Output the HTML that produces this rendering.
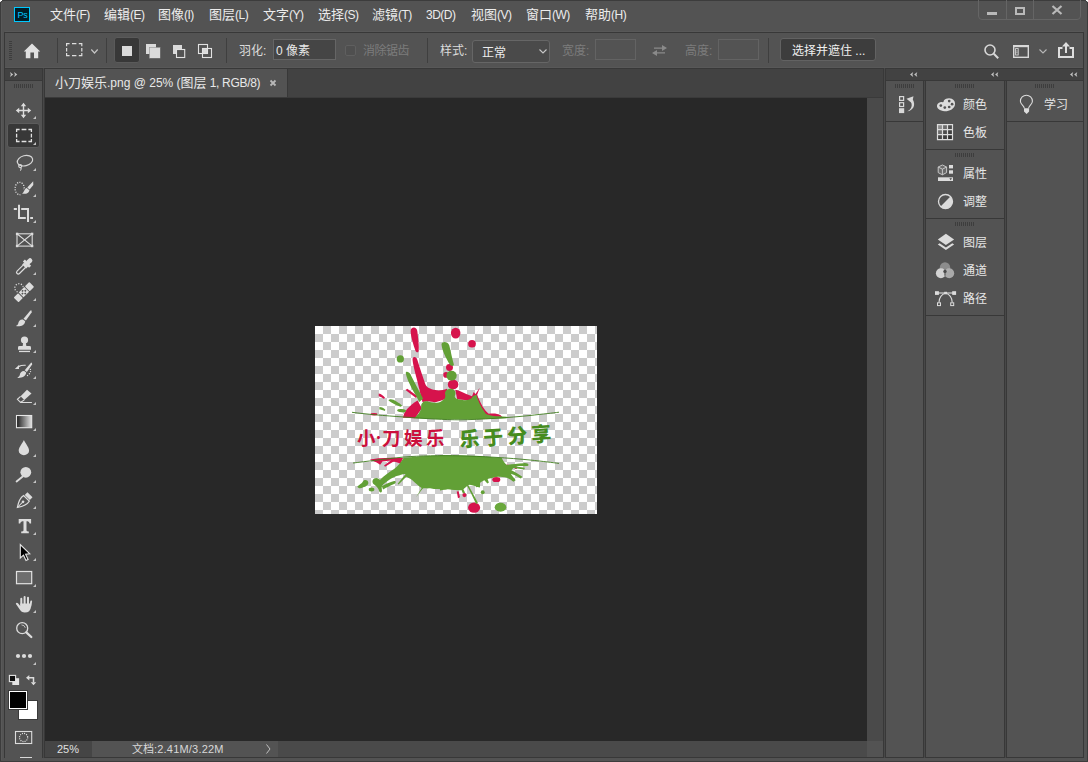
<!DOCTYPE html>
<html lang="zh-CN">
<head>
<meta charset="utf-8">
<title>Photoshop</title>
<style>
*{box-sizing:border-box;margin:0;padding:0}
html,body{width:1088px;height:762px;overflow:hidden;background:#535353}
body{font-family:"Liberation Sans","Noto Sans CJK SC",sans-serif;color:#e4e4e4;font-size:12px;position:relative}
.a{position:absolute}
.ln{position:absolute;background:#383838}
.t{position:absolute;white-space:nowrap;line-height:16px}
.menu .t{font-size:13px;top:7px;color:#ececec}
.l{font-size:12px;letter-spacing:-0.5px}
.opt .t{font-size:12px;color:#dcdcdc}
.dim{color:#7c7c7c !important}
.inp{position:absolute;background:#454545;border:1px solid #656565}
.inp.d{background:#535353;border-color:#636363}
.grip{position:absolute;height:4px;background:repeating-linear-gradient(90deg,#3d3d3d 0,#3d3d3d 1px,transparent 1px,transparent 2px)}
.gripv{position:absolute;width:3px;background:repeating-linear-gradient(180deg,#3d3d3d 0,#3d3d3d 1px,transparent 1px,transparent 2px)}
.pl .t{font-size:12px;color:#e6e6e6}
svg{position:absolute;overflow:visible}
.tri{position:absolute;width:0;height:0;border-left:3px solid transparent;border-bottom:3px solid #c8c8c8}
</style>
</head>
<body>
<!-- window frame -->
<div class="a" style="left:0;top:0;width:1088px;height:762px;border:1px solid #3c3c3c;border-radius:3px 3px 0 0"></div>
<div class="a" style="left:0;top:0;width:2px;height:1px;background:#fff"></div>
<div class="a" style="left:1086px;top:0;width:2px;height:1px;background:#fff"></div><div class="a" style="left:1087px;top:1px;width:1px;height:1px;background:#ddd"></div>
<div class="a" style="left:0;top:1px;width:1px;height:1px;background:#ddd"></div>

<!-- MENU BAR -->
<div class="menu">
  <div class="a" style="left:14px;top:7px;width:16px;height:15px;background:#001d26;border:1px solid #00c8ff;outline:0"></div>
  <div class="t" style="left:17.5px;top:7px;font-size:9px;color:#00c8ff;letter-spacing:-0.3px;line-height:16px">Ps</div>
  <div class="t" style="left:50px">文件<span class="l">(F)</span></div>
  <div class="t" style="left:104px">编辑<span class="l">(E)</span></div>
  <div class="t" style="left:158px">图像<span class="l">(I)</span></div>
  <div class="t" style="left:209px">图层<span class="l">(L)</span></div>
  <div class="t" style="left:263px">文字<span class="l">(Y)</span></div>
  <div class="t" style="left:318px">选择<span class="l">(S)</span></div>
  <div class="t" style="left:372px">滤镜<span class="l">(T)</span></div>
  <div class="t" style="left:426px"><span class="l">3D(D)</span></div>
  <div class="t" style="left:471px">视图<span class="l">(V)</span></div>
  <div class="t" style="left:526px">窗口<span class="l">(W)</span></div>
  <div class="t" style="left:585px">帮助<span class="l">(H)</span></div>
  <!-- window controls -->
  <div class="a" style="left:978px;top:-1px;width:103px;height:21px;border:1px solid #656565;border-radius:0 0 4px 4px"></div>
  <div class="a" style="left:1006px;top:0;width:1px;height:19px;background:#656565"></div>
  <div class="a" style="left:1033px;top:0;width:1px;height:19px;background:#656565"></div>
  <div class="a" style="left:987px;top:12px;width:10px;height:3px;background:#b9b9b9"></div>
  <div class="a" style="left:1015px;top:7px;width:10px;height:8px;border:2px solid #b9b9b9"></div>
  <svg style="left:1052px;top:6px" width="10" height="8" viewBox="0 0 10 8"><path d="M0.5 0 L9.5 8 M9.5 0 L0.5 8" stroke="#b9b9b9" stroke-width="2.2" fill="none"/></svg>
</div>

<!-- OPTIONS BAR -->
<div class="opt">
  <div class="ln" style="left:4px;top:32px;width:1080px;height:1px"></div>
  <div class="ln" style="left:4px;top:32px;width:1px;height:726px"></div>
  <div class="ln" style="left:1083px;top:32px;width:1px;height:726px"></div>
  <div class="ln" style="left:42px;top:757px;width:1042px;height:1px"></div>
  <div class="ln" style="left:4px;top:68px;width:1080px;height:1px"></div>
  <div class="a" style="left:5px;top:67px;width:1078px;height:1px;background:#585858"></div>
  <div class="a" style="left:5px;top:31px;width:1078px;height:1px;background:#585858"></div>
  <div class="a" style="left:1px;top:3px;width:1px;height:757px;background:#595959"></div>
  <div class="gripv" style="left:9px;top:41px;height:20px"></div>
  <!-- home -->
  <svg style="left:24px;top:43px" width="16" height="15" viewBox="0 0 16 15"><path d="M8 0.6 L16.2 8.4 L14.2 8.4 L14.2 15.2 L10 15.2 L10 9.4 L6.4 9.4 L6.4 15.2 L1.8 15.2 L1.8 8.4 L-0.2 8.4 Z" fill="#e0e0e0"/></svg>
  <div class="ln" style="left:57px;top:38px;width:1px;height:25px;background:#3f3f3f"></div>
  <svg style="left:66px;top:43px" width="16" height="13" viewBox="0 0 16 13"><path d="M0.6 3.2 V0.6 H3.6 M6 0.6 H10.4 M12.8 0.6 H15.8 V3.2 M0.6 5 V8.4 M15.8 5 V8.4 M0.6 10 V12.6 H3.6 M6 12.6 H10.4 M12.8 12.6 H15.8 V10" fill="none" stroke="#dedede" stroke-width="1.2"/></svg>
  <svg style="left:91px;top:49px" width="7" height="5" viewBox="0 0 7 5"><path d="M0.3 0.5 L3.5 4 L6.7 0.5" stroke="#c4c4c4" stroke-width="1.2" fill="none"/></svg>
  <div class="ln" style="left:106px;top:38px;width:1px;height:25px;background:#3f3f3f"></div>
  <div class="a" style="left:114px;top:37px;width:26px;height:26px;background:#383838;border:1px solid #5a5a5a;border-radius:3px"></div>
  <div class="a" style="left:122px;top:46px;width:10px;height:10px;background:#dadada"></div>
  <!-- add -->
  <svg style="left:146px;top:44px" width="14" height="14" viewBox="0 0 14 14"><rect x="0" y="0" width="10" height="10" fill="#dadada"/><rect x="3.6" y="3.6" width="10.4" height="10.4" fill="#dadada" stroke="#9c9c9c" stroke-width="0.7"/><rect x="4" y="4" width="10" height="10" fill="#dadada"/></svg>
  <!-- subtract -->
  <svg style="left:173px;top:45px" width="13" height="13" viewBox="0 0 13 13"><rect x="0" y="0" width="9" height="9" fill="#dadada"/><rect x="3.5" y="4.5" width="8.2" height="8" fill="#535353" stroke="#e2e2e2" stroke-width="1.1"/></svg>
  <!-- intersect -->
  <svg style="left:198px;top:44px" width="14" height="14" viewBox="0 0 14 14"><rect x="0.5" y="0.5" width="9" height="9" fill="none" stroke="#e2e2e2" stroke-width="1.1"/><rect x="4.5" y="4.5" width="9" height="9" fill="none" stroke="#e2e2e2" stroke-width="1.1"/><rect x="5" y="5" width="4" height="4" fill="#dadada"/></svg>
  <div class="ln" style="left:226px;top:38px;width:1px;height:25px;background:#3f3f3f"></div>
  <div class="t" style="left:239px;top:43px">羽化:</div>
  <div class="inp" style="left:273px;top:39px;width:63px;height:21px"></div>
  <div class="t" style="left:276px;top:43px;color:#e8e8e8">0 像素</div>
  <div class="a" style="left:345px;top:45px;width:11px;height:11px;border:1px solid #5f5f5f;border-radius:2px;background:#4f4f4f"></div>
  <div class="t dim" style="left:363px;top:43px;letter-spacing:-0.5px">消除锯齿</div>
  <div class="ln" style="left:427px;top:38px;width:1px;height:25px;background:#3f3f3f"></div>
  <div class="t" style="left:440px;top:43px">样式:</div>
  <div class="a" style="left:472px;top:40px;width:78px;height:23px;background:#4a4a4a;border:1px solid #666;border-radius:3px"></div>
  <div class="t" style="left:482px;top:45px;color:#ececec">正常</div>
  <svg style="left:539px;top:49px" width="8" height="5" viewBox="0 0 8 5"><path d="M0.5 0.5 L4 4 L7.5 0.5" stroke="#c8c8c8" stroke-width="1.1" fill="none"/></svg>
  <div class="t dim" style="left:562px;top:43px">宽度:</div>
  <div class="inp d" style="left:595px;top:39px;width:41px;height:21px"></div>
  <svg style="left:652px;top:44px" width="15" height="13" viewBox="0 0 15 13"><path d="M2 3.5 H10 V1 L15 4 L10 7 V4.8 H2 Z M13 9.5 H5 V12 L0 9 L5 6 V8.2 H13 Z" fill="#8a8a8a"/></svg>
  <div class="t dim" style="left:685px;top:43px">高度:</div>
  <div class="inp d" style="left:718px;top:39px;width:41px;height:21px"></div>
  <div class="ln" style="left:768px;top:38px;width:1px;height:25px;background:#3f3f3f"></div>
  <div class="a" style="left:780px;top:38px;width:96px;height:23px;background:#3d3d3d;border:1px solid #626262;border-radius:3px"></div>
  <div class="t" style="left:792px;top:43px;color:#f0f0f0">选择并遮住 ...</div>
  <!-- search -->
  <svg style="left:983.7px;top:44px" width="15" height="15" viewBox="0 0 15 15"><circle cx="6" cy="6" r="5" fill="none" stroke="#d8d8d8" stroke-width="1.6"/><path d="M9.8 9.8 L14.2 14.2" stroke="#d8d8d8" stroke-width="2"/></svg>
  <!-- workspace -->
  <svg style="left:1013px;top:45px" width="16" height="13" viewBox="0 0 16 13"><rect x="0.7" y="0.7" width="14.6" height="11.6" fill="none" stroke="#d8d8d8" stroke-width="1.4"/><rect x="0" y="0" width="16" height="2.2" fill="#d8d8d8"/><rect x="2.6" y="3.6" width="2.6" height="6.4" fill="none" stroke="#d8d8d8" stroke-width="0.9"/><rect x="3.2" y="5.6" width="1.4" height="0.8" fill="#d8d8d8"/><rect x="3.2" y="7.4" width="1.4" height="0.8" fill="#d8d8d8"/></svg>
  <svg style="left:1038.7px;top:49px" width="8" height="5" viewBox="0 0 8 5"><path d="M0.5 0.5 L4 4 L7.5 0.5" stroke="#b8b8b8" stroke-width="1.1" fill="none"/></svg>
  <!-- share -->
  <svg style="left:1058px;top:42px" width="16" height="16" viewBox="0 0 16 16"><path d="M4.5 6 H1 V15 H15 V6 H11.5" fill="none" stroke="#dedede" stroke-width="2"/><path d="M8 11 V3" stroke="#dedede" stroke-width="2"/><path d="M4 4.5 L8 0 L12 4.5 Z" fill="#dedede"/></svg>
</div>

<div class="a" style="left:43px;top:68px;width:1px;height:1px;background:#484848"></div><div class="a" style="left:884px;top:68px;width:1px;height:1px;background:#484848"></div>
<!-- TOOLBAR -->
<div class="tb" id="tb">
  <div class="a" style="left:5px;top:69px;width:37px;height:11px;background:#424242"></div>
  <div class="ln" style="left:5px;top:80px;width:37px;height:1px"></div>
  <div class="a" style="left:42px;top:69px;width:3px;height:689px;background:linear-gradient(90deg,#383838 0,#383838 1px,#484848 1px,#484848 2px,#383838 2px,#383838 3px)"></div>
  <svg style="left:10px;top:72px" width="8" height="5" viewBox="0 0 8 5"><path d="M0 0 L3.2 2.5 L0 5 L0.8 2.5 Z M4.1 0 L7.3 2.5 L4.1 5 L4.9 2.5 Z" fill="#c4c4c4"/></svg>
  <div class="grip" style="left:14px;top:84px;width:20px"></div>
  <div class="a" style="left:7px;top:123px;width:33px;height:25px;background:#383838;border:1px solid #5c5c5c;border-radius:3px"></div>
<!--TOOLS-START-->
<svg style="left:0;top:0" width="45" height="762" viewBox="0 0 45 762" fill="none">
<g fill="#c4c4c4">
<path d="M33 119 H36 V116 Z"/>
<path d="M33 145 H36 V142 Z"/>
<path d="M33 171 H36 V168 Z"/>
<path d="M33 197 H36 V194 Z"/>
<path d="M33 223 H36 V220 Z"/>
<path d="M33 275 H36 V272 Z"/>
<path d="M33 301 H36 V298 Z"/>
<path d="M33 327 H36 V324 Z"/>
<path d="M33 353 H36 V350 Z"/>
<path d="M33 379 H36 V376 Z"/>
<path d="M33 405 H36 V402 Z"/>
<path d="M33 431 H36 V428 Z"/>
<path d="M33 457 H36 V454 Z"/>
<path d="M33 483 H36 V480 Z"/>
<path d="M33 509 H36 V506 Z"/>
<path d="M33 535 H36 V532 Z"/>
<path d="M33 561 H36 V558 Z"/>
<path d="M33 587 H36 V584 Z"/>
<path d="M33 613 H36 V610 Z"/>
<path d="M33 665 H36 V662 Z"/>
</g>
<g fill="#dcdcdc" stroke="none">
<!-- move -->
<path d="M22.8 105.5 H24.2 V109.8 H28.5 V111.2 H24.2 V115.5 H22.8 V111.2 H18.5 V109.8 H22.8 Z"/>
<path d="M23.5 102.8 L26.2 106.2 H20.8 Z M23.5 118.2 L26.2 114.8 H20.8 Z M15.8 110.5 L19.2 107.8 V113.2 Z M31.2 110.5 L27.8 107.8 V113.2 Z"/>
</g>
<!-- marquee -->
<path d="M16.6 132 V129.5 H19.6 M21.6 129.5 H26.4 M28.4 129.5 H31.4 V132 M16.6 133.8 V137.4 M31.4 133.8 V137.4 M16.6 139 V141.5 H19.6 M21.6 141.5 H26.4 M28.4 141.5 H31.4 V139" stroke="#e2e2e2" stroke-width="1.3"/>
<!-- lasso -->
<g stroke="#d6d6d6" stroke-width="1.2">
<ellipse cx="25" cy="160.7" rx="7.8" ry="5.1" transform="rotate(-14 25 160.7)"/>
<circle cx="20.2" cy="166.1" r="1.5"/>
<path d="M20.9 167.4 Q21.8 169.4 20.3 170.6"/>
</g>
<!-- quick select -->
<ellipse cx="19.7" cy="188.5" rx="4.6" ry="6.2" stroke="#e0e0e0" stroke-width="1.3" stroke-dasharray="1.1 1.36"/>
<g fill="#dcdcdc">
<path d="M33.2 181.2 L33.3 185 L29.6 189.6 L27.3 187.6 Z M26.7 188 C24.3 188.6 24.4 192 22 193.6 C25 194.4 29.2 193.3 29.4 190.2 Z" stroke="#535353" stroke-width="2.2"/>
<path d="M33.2 181.2 L33.3 185 L29.6 189.6 L27.3 187.6 Z"/>
<path d="M26.7 188 C24.3 188.6 24.4 192 22 193.6 C25 194.4 29.2 193.3 29.4 190.2 Z"/>
</g>
<!-- crop -->
<path d="M19 204.8 V217.9 H25.8 M13.8 209 H16.9 M21.2 209 H28 V222 M30.2 217.9 H33" stroke="#dcdcdc" stroke-width="2"/>
<!-- frame -->
<g stroke="#dcdcdc" stroke-width="1.1">
<rect x="17" y="233.8" width="15.2" height="12.3"/>
<path d="M17 233.8 L32.2 246.1 M32.2 233.8 L17 246.1"/>
</g>
<g fill="#dcdcdc"><rect x="15.9" y="232.7" width="2.4" height="2.4"/><rect x="30.9" y="232.7" width="2.4" height="2.4"/><rect x="15.9" y="244.8" width="2.4" height="2.4"/><rect x="30.9" y="244.8" width="2.4" height="2.4"/></g>
<!-- eyedropper -->
<g transform="translate(24.2 266.4) rotate(45)">
<rect x="-2.3" y="-10.6" width="4.6" height="7" rx="2.3" fill="#dcdcdc"/>
<rect x="-4.4" y="-5.4" width="8.8" height="2.9" fill="#dcdcdc"/>
<rect x="-2.8" y="-2.8" width="5.6" height="2.8" fill="#dcdcdc"/>
<path d="M-1.7 -0.5 V8.4 A1.7 1.7 0 0 0 1.7 8.4 V-0.5" stroke="#dcdcdc" stroke-width="1.2"/>
</g>
<!-- healing -->
<circle cx="19.1" cy="288" r="4.3" stroke="#e0e0e0" stroke-width="1.3" stroke-dasharray="1.1 1.6"/>
<g transform="translate(23.9 292.2) rotate(-45)">
<rect x="-12" y="-4.3" width="24" height="8.6" fill="#535353"/>
<rect x="-11" y="-3.4" width="6.2" height="6.8" rx="0.8" fill="#dcdcdc"/>
<rect x="4.8" y="-3.4" width="6.2" height="6.8" rx="0.8" fill="#dcdcdc"/>
<rect x="-3.9" y="-3.4" width="7.8" height="6.8" fill="#dcdcdc"/>
<g fill="#535353"><rect x="-0.85" y="-2.7" width="1.7" height="1.6"/><rect x="-0.85" y="1.1" width="1.7" height="1.6"/><rect x="-2.9" y="-0.8" width="1.7" height="1.6"/><rect x="1.2" y="-0.8" width="1.7" height="1.6"/></g>
</g>
<!-- brush -->
<g fill="#dcdcdc">
<path d="M30.4 310.5 L31.6 310.6 L31.6 312.4 L25.9 320.6 L23.5 318.8 Z"/>
<path d="M22.9 319.5 C19.8 319.3 18.6 321.6 18.3 323.3 C18 325 17 325.6 15.9 326 C19 326.8 24.6 326.3 25.2 321.2 Z"/>
<!-- stamp -->
<circle cx="24.5" cy="340" r="3.6"/>
<path d="M23.2 342.5 H25.8 L26.4 346.3 H22.6 Z"/>
<path d="M18 349.8 V347.4 Q18 346.1 19.5 346.1 H29.5 Q31 346.1 31 347.4 V349.8 Z"/>
<rect x="19" y="350.8" width="11" height="1.3"/>
<!-- history brush -->
<path d="M31 362.8 L32 362.8 L32.1 364.6 L26.9 371.9 L24.7 370.3 Z"/>
<path d="M24.2 370.9 C21.4 370.8 20.2 372.8 19.9 374.5 C19.6 376.2 18.4 377.2 17 377.8 C20 378.3 25.6 377.6 26.2 372.6 Z"/>
<path d="M14.8 368.9 L19 365 V369 Z"/>
<circle cx="30.4" cy="369.4" r="0.7"/><circle cx="30.5" cy="371.6" r="0.7"/><circle cx="29.4" cy="373.7" r="0.7"/><circle cx="27.5" cy="375.5" r="0.7"/>
</g>
<path d="M18.5 366.6 Q21.5 365 25.6 365.3" stroke="#dcdcdc" stroke-width="1.2"/>
<!-- eraser -->
<path d="M27 389.7 L31.5 393.4 L24.3 399.9 L20.6 396.3 Z" fill="#dcdcdc"/>
<path d="M20.6 396.3 L17.4 399.3 L20.6 402.5 H31.9 M20.8 402.3 L24.3 399.9" stroke="#dcdcdc" stroke-width="1.1"/>
<!-- gradient -->
<defs><linearGradient id="gr" x1="0" x2="1" y1="0" y2="0"><stop offset="0" stop-color="#1c1c1c"/><stop offset="1" stop-color="#e4e4e4"/></linearGradient></defs>
<rect x="16.5" y="415.5" width="15.2" height="12.2" fill="url(#gr)" stroke="#e6e6e6" stroke-width="1.1"/>
<!-- drop -->
<path d="M23.9 440 C23 442.5 18.7 447.3 18.7 450.4 A5.2 4.9 0 0 0 29.1 450.4 C29.1 447.3 24.8 442.5 23.9 440 Z" fill="#dcdcdc"/>
<!-- dodge -->
<circle cx="25.8" cy="472.3" r="5.4" fill="#dcdcdc"/>
<path d="M22.4 476.8 L16.6 481.4" stroke="#dcdcdc" stroke-width="1.9" stroke-linecap="round"/>
<!-- pen -->
<g transform="translate(24.6 500.2) rotate(45)">
<path d="M0 10.2 C-3.2 5.5 -5 1.5 -4 -2.6 L4 -2.6 C5 1.5 3.2 5.5 0 10.2 Z" stroke="#dcdcdc" stroke-width="1.2"/>
<path d="M0 10 V3" stroke="#dcdcdc" stroke-width="1"/>
<circle cx="0" cy="2.2" r="1.3" fill="#dcdcdc"/>
<rect x="-3.6" y="-7.6" width="7.2" height="3.8" fill="#dcdcdc"/>
</g>
<!-- type -->
<path d="M18.7 519 H31.1 V523.6 H29.6 Q29.4 521.4 27.6 521.2 H26.5 V530.4 Q26.5 531.3 28.8 531.4 V533.3 H21.2 V531.4 Q23.5 531.3 23.5 530.4 V521.2 H22.4 Q20.4 521.4 20.2 523.6 H18.7 Z" fill="#dcdcdc"/>
<!-- path select -->
<path d="M20.3 544.6 V558 L23.5 555.2 L26 560.6 L28.1 559.6 L25.6 554.3 L29.8 553.8 Z" fill="#000" stroke="#e4e4e4" stroke-width="1.1" stroke-linejoin="miter"/>
<!-- rectangle -->
<rect x="16.5" y="571.5" width="15.2" height="12.2" fill="#6e6e6e" stroke="#e2e2e2" stroke-width="1.2"/>
<!-- hand -->
<g stroke="#dcdcdc" stroke-width="2" stroke-linecap="round">
<path d="M21.3 598.8 V605 M24.6 597 V604 M28 597.8 V604"/>
<path d="M31.2 601.3 L30.4 606" stroke-width="1.8"/>
</g>
<path d="M20.3 603.5 H31.3 L31 607 Q30.4 612.6 24.8 612.6 Q21.4 612.6 19.4 609 L15.8 603.8 Q16.4 602.2 18 603.3 L20.3 606 Z" fill="#dcdcdc"/>
<!-- zoom -->
<circle cx="22.2" cy="628.2" r="5.5" stroke="#dcdcdc" stroke-width="1.3"/>
<path d="M26.3 632.4 L31.3 637" stroke="#dcdcdc" stroke-width="2.3" stroke-linecap="round"/>
<path d="M21.5 624.9 Q24.6 625 25.3 627.8" stroke="#c8c8c8" stroke-width="0.9"/>
<!-- more -->
<g fill="#dcdcdc"><circle cx="18" cy="656" r="2.1"/><circle cx="24" cy="656" r="2.1"/><circle cx="30" cy="656" r="2.1"/></g>
<!-- default colors -->
<rect x="12.3" y="678.2" width="6.8" height="6.8" fill="#e4e4e4"/>
<rect x="9.4" y="675.4" width="6.2" height="6.2" fill="#111" stroke="#e4e4e4" stroke-width="1.1"/>
<!-- swap -->
<path d="M29 677.7 H33.5 V682.6" stroke="#dcdcdc" stroke-width="1.5"/>
<path d="M26 677.7 L29.3 674.9 V680.5 Z M33.5 685.3 L30.8 682.3 H36.2 Z" fill="#dcdcdc"/>
<!-- bg / fg -->
<rect x="18.5" y="700.5" width="19" height="19" fill="#fff" stroke="#3a3a3a" stroke-width="1"/>
<rect x="8.5" y="690.5" width="19" height="19" fill="#fff" stroke="#3a3a3a" stroke-width="1"/>
<rect x="10" y="692" width="16" height="16" fill="#000"/>
<!-- quick mask -->
<rect x="15.5" y="731.5" width="16.2" height="12" stroke="#dcdcdc" stroke-width="1.1"/>
<circle cx="23.6" cy="737.5" r="4.1" stroke="#e4e4e4" stroke-width="1.2" stroke-dasharray="1 1.15"/>
<rect x="20" y="757" width="12" height="1" fill="#d8d8d8"/>
</svg>
<!--TOOLS-END-->
</div>

<!-- DOCUMENT AREA -->
<div class="doc">
  <div class="a" style="left:45px;top:69px;width:840px;height:29px;background:#424242"></div>
  <div class="a" style="left:45px;top:69px;width:243px;height:29px;background:#535353;border-right:1px solid #383838"></div>
  <div class="t" style="left:55px;top:75px;font-size:13px;color:#e8e8e8">小刀娱乐<span style="font-size:12px">.png @ 25% (</span>图层<span style="font-size:12px;letter-spacing:-0.3px"> 1, RGB/8)</span></div>
  <svg style="left:270px;top:80px" width="6" height="6" viewBox="0 0 6 6"><path d="M0.5 0.5 L5.5 5.5 M5.5 0.5 L0.5 5.5" stroke="#b8b8b8" stroke-width="1.8"/></svg>
  <div class="a" style="left:45px;top:97px;width:838px;height:1px;background:#3a3a3a"></div>
  <div class="a" style="left:45px;top:98px;width:822px;height:643px;background:#282828"></div>
  <div class="a" style="left:867px;top:98px;width:16px;height:643px;background:#4a4a4a"></div>
  <div class="a" style="left:45px;top:741px;width:822px;height:16px;background:#4a4a4a"></div>
  <div class="a" style="left:867px;top:741px;width:16px;height:16px;background:#535353"></div>
  <div class="a" style="left:45px;top:741px;width:47px;height:16px;background:#454545"></div>
  <div class="t" style="left:57px;top:741px;font-size:11px;color:#e0e0e0">25%</div>
  <div class="a" style="left:92px;top:741px;width:186px;height:16px;background:#535353"></div>
  <div class="t" style="left:132px;top:741px;font-size:11px;color:#d8d8d8">文档<span style="letter-spacing:0.2px">:2.41M/3.22M</span></div>
  <svg style="left:266px;top:744px" width="5" height="10" viewBox="0 0 5 10"><path d="M0.5 0.5 L4 5 L0.5 9.5" stroke="#c0c0c0" stroke-width="1" fill="none"/></svg>
  <div class="a" style="left:883px;top:69px;width:3px;height:689px;background:linear-gradient(90deg,#383838 0,#383838 1px,#484848 1px,#484848 2px,#383838 2px,#383838 3px)"></div>
<!--ART-START-->
<div class="a" style="left:315px;top:326px;width:282px;height:188px;background:repeating-conic-gradient(#ccc 0% 25%,#fff 0% 50%) 0 0/16px 16px"></div>
<svg style="left:315px;top:326px" width="282" height="188" viewBox="0 0 282 188">
<g transform="translate(65 0) scale(0.1287)">
 <g fill="#d6134c">
  <path d="M238 40 C236 5 286 0 290 40 C296 90 306 160 300 195 C297 212 280 205 274 188 C262 150 240 90 238 40 Z"/>
  <path d="M253 262 C250 235 282 232 290 262 C310 330 335 400 352 450 C362 478 390 488 430 498 C460 506 490 498 520 488 L530 560 L470 580 L430 592 L380 585 L330 590 C322 560 312 520 300 470 C285 400 258 320 253 262 Z"/>
  <path d="M178 712 C185 670 220 620 292 578 L325 640 L272 716 Z"/>
  <circle cx="540" cy="322" r="27"/><circle cx="513" cy="380" r="22"/><ellipse cx="568" cy="455" rx="41" ry="38"/>
  <ellipse cx="588" cy="55" rx="37" ry="42"/><circle cx="715" cy="138" r="30"/>
  <path d="M585 495 C630 505 680 535 715 545 L728 512 L742 528 L775 480 L755 535 C775 590 810 660 845 682 C880 676 915 680 935 692 L950 708 L800 708 L720 580 L600 570 Z"/>
  <path d="M198 498 L212 488 L292 545 L280 560 Z"/>
  <path d="M-10 525 C10 528 30 545 40 560 L28 566 C18 556 5 548 -10 545 Z"/>
 </g>
 <g fill="#62a036">
  <path d="M478 145 C476 118 525 115 538 150 C552 205 562 260 574 300 C572 318 550 312 540 296 C515 250 484 195 478 145 Z"/>
  <circle cx="158" cy="256" r="28"/>
  <ellipse cx="556" cy="386" rx="40" ry="38"/>
  <path d="M200 368 C200 348 225 355 238 378 C268 435 302 500 335 565 L305 590 C272 525 212 435 200 368 Z"/>
  <path d="M66 578 C78 562 105 572 125 584 C145 596 165 608 172 620 L160 628 C130 612 88 598 66 578 Z"/>
  <path d="M-5 630 C15 630 32 640 42 650 L36 660 C20 652 8 648 -5 648 Z"/>
  <ellipse cx="168" cy="658" rx="35" ry="13" transform="rotate(5 168 658)"/>
  <path d="M268 716 C292 690 325 660 320 625 C318 595 345 578 378 588 C415 600 450 602 480 582 C500 570 512 558 506 532 C500 500 530 484 556 488 C584 493 594 520 582 542 C576 562 602 570 640 575 C680 580 708 572 720 548 L748 532 C762 580 785 635 822 682 C850 700 900 700 985 706 L985 716 C700 728 500 726 268 716 Z"/>
 </g>
</g>
<!-- lower-left (zoom C) -->
<g transform="translate(25 114) scale(0.1287)">
 <path d="M232 152 L300 142 L400 138 L490 140 L470 185 C450 175 430 165 410 170 L350 208 L342 198 L395 160 L330 168 L312 192 L285 175 Z" fill="#d6134c"/>
 <g fill="#62a036">
  <path d="M495 137 Q640 121 777 119.5 L932 121.5 L1088 127 L1088 370 C1060 365 1040 350 1000 345 C980 360 960 385 940 390 C900 392 860 375 820 385 C780 380 740 385 700 375 C670 378 650 372 640 380 L590 445 L635 372 C610 360 590 335 560 310 C540 295 525 290 515 285 L455 345 L448 340 L510 265 C490 260 470 275 440 280 C410 290 380 310 350 335 C330 350 320 360 325 385 C330 410 315 415 305 400 C300 380 290 365 270 350 C250 340 245 315 265 300 C285 290 300 300 310 310 C340 280 380 250 420 225 C450 205 470 175 495 138 Z"/>
  <path d="M135 362 C150 345 170 340 178 322 C190 305 215 310 220 330 C222 350 200 362 180 368 C165 378 140 380 135 362 Z"/>
  <ellipse cx="245" cy="385" rx="22" ry="15"/>
  <path d="M325 360 C350 345 390 325 420 318 C440 318 435 335 420 342 C390 355 360 370 335 385 Z"/>
 </g>
</g>
<!-- lower-right (zoom E) -->
<g transform="translate(125 114) scale(0.1287)">
 <g fill="#d6134c">
  <ellipse cx="438" cy="308" rx="30" ry="18"/><circle cx="590" cy="215" r="10"/>
  <path d="M515 190 L570 198 L575 212 L530 205 Z"/>
  <path d="M130 400 L145 398 L155 445 L140 452 Z"/><circle cx="190" cy="428" r="16"/>
  <ellipse cx="265" cy="525" rx="47" ry="40"/>
 </g>
 <g fill="#62a036">
  <path d="M0 118 L300 125 L480 140 C490 160 500 180 520 195 C560 185 600 185 650 180 C680 175 700 195 680 202 C650 205 620 200 590 205 L660 215 L655 230 L570 218 L555 235 C585 250 620 270 640 285 L628 300 C600 285 570 265 550 262 C560 280 580 300 588 312 L570 325 C550 310 530 295 505 290 C470 282 440 285 405 296 C390 300 375 300 370 305 L380 330 L368 338 L345 312 C330 318 310 330 295 345 L285 370 L270 345 C255 340 235 342 220 350 C240 390 270 440 295 490 L280 498 C260 450 235 400 210 355 C200 362 190 372 180 378 L195 410 L178 415 L165 385 C140 392 100 385 60 380 C40 382 20 388 0 392 Z"/>
  <circle cx="332" cy="406" r="15"/>
 </g>
 <ellipse cx="470" cy="522" rx="45" ry="35" fill="#6aa83c"/>
 <ellipse cx="438" cy="308" rx="30" ry="18" fill="#d6134c"/>
</g>
<ellipse cx="59" cy="88.2" rx="3.4" ry="1.2" fill="#d6134c"/>
<path d="M37 86.3 C50 88 70 89.8 89 91 C110 92.6 130 93.8 145 93.8 C165 93.6 195 91.6 215 89.5 C228 88 238 87 244 86.2" fill="none" stroke="#3f7d1e" stroke-width="0.9"/>
<path d="M38 137 C50 135.6 70 133 89 131 C105 129.8 125 129.4 145 129.8 C165 130.2 195 132 215 134 C228 135.4 238 136.6 244 137.4" fill="none" stroke="#3f7d1e" stroke-width="0.9"/>
<g font-family="'Noto Sans CJK SC',sans-serif" font-weight="700" font-size="18.5" fill="#cc0f3c">
 <text x="42" y="119">小</text><text x="57.5" y="117" font-size="12">·</text><text x="67" y="119">刀</text><text x="89" y="119">娱</text><text x="111" y="119">乐</text>
</g>
<g font-family="'Noto Sans CJK SC',sans-serif" font-weight="900" font-size="20" fill="#468c1e" transform="rotate(-4 146 122)">
 <text x="145" y="121">乐</text><text x="169" y="121">于</text><text x="193" y="121">分</text><text x="217" y="121">享</text>
</g>
</svg>
<!--ART-END-->
</div>

<!-- RIGHT PANELS -->
<div class="pl">
  <div class="a" style="left:886px;top:69px;width:197px;height:11px;background:#424242"></div>
  <div class="ln" style="left:886px;top:80px;width:197px;height:1px"></div>
  <div class="a" style="left:923px;top:81px;width:3px;height:677px;background:linear-gradient(90deg,#383838 0,#383838 1px,#484848 1px,#484848 2px,#383838 2px,#383838 3px)"></div>
  <div class="a" style="left:1004px;top:81px;width:3px;height:677px;background:linear-gradient(90deg,#383838 0,#383838 1px,#484848 1px,#484848 2px,#383838 2px,#383838 3px)"></div>
  <svg style="left:910px;top:72px" width="8" height="5" viewBox="0 0 8 5"><path d="M3.2 0 L0 2.5 L3.2 5 L2.4 2.5 Z M7.3 0 L4.1 2.5 L7.3 5 L6.5 2.5 Z" fill="#c4c4c4"/></svg>
  <svg style="left:991px;top:72px" width="8" height="5" viewBox="0 0 8 5"><path d="M3.2 0 L0 2.5 L3.2 5 L2.4 2.5 Z M7.3 0 L4.1 2.5 L7.3 5 L6.5 2.5 Z" fill="#c4c4c4"/></svg>
  <svg style="left:1070px;top:72px" width="8" height="5" viewBox="0 0 8 5"><path d="M3.2 0 L0 2.5 L3.2 5 L2.4 2.5 Z M7.3 0 L4.1 2.5 L7.3 5 L6.5 2.5 Z" fill="#c4c4c4"/></svg>
  <div class="grip" style="left:895px;top:84px;width:20px"></div>
  <div class="grip" style="left:955px;top:84px;width:20px"></div>
  <div class="grip" style="left:1035px;top:84px;width:20px"></div>
  <div class="grip" style="left:955px;top:153px;width:20px"></div>
  <div class="grip" style="left:955px;top:222px;width:20px"></div>
  <div class="ln" style="left:886px;top:121px;width:37px;height:1px"></div>
  <div class="ln" style="left:1007px;top:121px;width:76px;height:1px"></div>
  <div class="ln" style="left:926px;top:149px;width:78px;height:1px"></div>
  <div class="ln" style="left:926px;top:218px;width:78px;height:1px"></div>
  <div class="ln" style="left:926px;top:315px;width:78px;height:1px"></div>
  <div class="t" style="left:963px;top:97px">颜色</div>
  <div class="t" style="left:963px;top:125px">色板</div>
  <div class="t" style="left:963px;top:166px">属性</div>
  <div class="t" style="left:963px;top:194px">调整</div>
  <div class="t" style="left:963px;top:235px">图层</div>
  <div class="t" style="left:963px;top:263px">通道</div>
  <div class="t" style="left:963px;top:291px">路径</div>
  <div class="t" style="left:1044px;top:97px">学习</div>
<!--PICONS-START-->
<svg style="left:886px;top:80px" width="200" height="240" viewBox="886 80 200 240" fill="none">
<!-- history -->
<g stroke="#d8d8d8" stroke-width="1.2"><rect x="899.6" y="96.6" width="4" height="3.8"/><rect x="899.6" y="102.7" width="4" height="3.8"/></g>
<rect x="899" y="108.2" width="5.2" height="4.9" fill="#d8d8d8"/>
<path d="M906.5 98.7 L913.5 96.3 L912 103.2 Z" fill="#d8d8d8"/>
<path d="M907.3 111.3 C911.6 109.4 913 105.4 910.4 100.6 L912.8 99.4 C916.2 105.6 912.8 110.4 907.3 111.3 Z" fill="#d8d8d8"/>
<!-- palette -->
<path d="M944 100.3 C945.4 98.5 949 97.6 951.8 98.8 C954.6 100 955.6 102.8 954.8 105.4 C953.8 108.8 949.4 111.4 944.6 111.2 C939.8 111 936.6 108.6 937 105.6 C937.3 103.2 940.4 101.6 942.6 102.2 C944 102.5 943.4 101.2 944 100.3 Z" fill="#dcdcdc"/>
<g fill="#535353"><circle cx="940.8" cy="105.6" r="1.35"/><circle cx="944.8" cy="107.6" r="1.35"/><circle cx="949.2" cy="107" r="1.35"/><circle cx="952.1" cy="104.2" r="1.35"/><circle cx="949.2" cy="101.1" r="1.35"/></g>
<!-- swatches -->
<rect x="937.5" y="124.6" width="15" height="15" fill="#444"/>
<rect x="937.5" y="124.6" width="5" height="5" fill="#8c8c8c"/><rect x="942.5" y="124.6" width="5" height="5" fill="#6c6c6c"/><rect x="947.5" y="124.6" width="5" height="5" fill="#4e4e4e"/>
<rect x="937.5" y="129.6" width="5" height="5" fill="#6c6c6c"/><rect x="942.5" y="129.6" width="5" height="5" fill="#4c4c4c"/><rect x="947.5" y="129.6" width="5" height="5" fill="#404040"/>
<rect x="937.5" y="134.6" width="5" height="5" fill="#444"/><rect x="942.5" y="134.6" width="5" height="5" fill="#3c3c3c"/><rect x="947.5" y="134.6" width="5" height="5" fill="#303030"/>
<path d="M937.5 124.6 H952.5 V139.6 H937.5 Z M942.5 124.6 V139.6 M947.5 124.6 V139.6 M937.5 129.6 H952.5 M937.5 134.6 H952.5" stroke="#dcdcdc" stroke-width="1.2"/>
<!-- properties -->
<path d="M942.4 165 L946.6 167 V172.6 L942.4 174.8 L938.2 172.6 V167 Z" fill="#6a6a6a" stroke="#d0d0d0" stroke-width="0.9"/>
<path d="M938.2 167 L942.4 169.2 L946.6 167 M942.4 169.2 V174.8" stroke="#d0d0d0" stroke-width="0.9"/>
<rect x="949" y="165" width="4" height="3.4" fill="#dcdcdc"/><rect x="949" y="170.3" width="4" height="3.4" fill="#dcdcdc"/>
<rect x="938" y="177.3" width="15" height="3.7" fill="#dcdcdc"/>
<path d="M949.4 178.3 H952 L950.7 180.2 Z" fill="#444"/>
<!-- adjust -->
<circle cx="945.5" cy="201.5" r="7" stroke="#dcdcdc" stroke-width="1.3"/>
<path d="M950.45 196.55 A7 7 0 0 1 940.55 206.45 Z" fill="#dcdcdc"/>
<!-- layers -->
<path d="M945.9 233.7 L954.1 239.4 L945.9 245 L937.8 239.4 Z" fill="#dcdcdc"/>
<path d="M939.6 243.2 L945.9 247.5 L952.3 243.2 L954.1 244.5 L945.9 250.1 L937.8 244.5 Z" fill="#dcdcdc"/>
<!-- channels -->
<circle cx="945" cy="267.4" r="5.2" fill="#8c8c8c"/>
<circle cx="940.9" cy="273.3" r="5" fill="#d2d2d2"/>
<circle cx="949.2" cy="273.3" r="5" fill="#b2b2b2" fill-opacity="0.9"/>
<path d="M945 268.6 A5 5 0 0 1 945.9 273 A5 5 0 0 1 945 277 A5 5 0 0 1 944.2 273 A5 5 0 0 1 945 268.6 Z" fill="#777"/>
<circle cx="945" cy="271.4" r="1.7" fill="#4a4a4a"/>
<!-- paths -->
<path d="M937 293 H954" stroke="#dcdcdc" stroke-width="1.1"/>
<path d="M945.6 293 C941.4 294.4 939.2 298 939 302.3 M945.6 293 C949.8 294.4 952 298 952.2 302.3" stroke="#dcdcdc" stroke-width="1.1"/>
<rect x="935" y="291.2" width="3.9" height="3.7" fill="#dcdcdc"/><rect x="952.2" y="291.2" width="3.9" height="3.7" fill="#dcdcdc"/><rect x="944.2" y="291.8" width="2.8" height="2.5" fill="#dcdcdc"/>
<rect x="937.5" y="302.8" width="3" height="2.8" stroke="#dcdcdc" stroke-width="1"/><rect x="950.7" y="302.8" width="3" height="2.8" stroke="#dcdcdc" stroke-width="1"/>
<!-- bulb -->
<path d="M1024.3 108.3 C1024 105.6 1020.4 104.4 1020.4 101.2 A6 6 0 0 1 1032.4 101.2 C1032.4 104.4 1028.8 105.6 1028.6 108.3" stroke="#dcdcdc" stroke-width="1.1"/>
<path d="M1024 108.2 H1029.1 V111.6 L1026.6 114.1 L1024 111.6 Z" fill="#dcdcdc"/>
</svg>
<!--PICONS-END-->
</div>
</body>
</html>
